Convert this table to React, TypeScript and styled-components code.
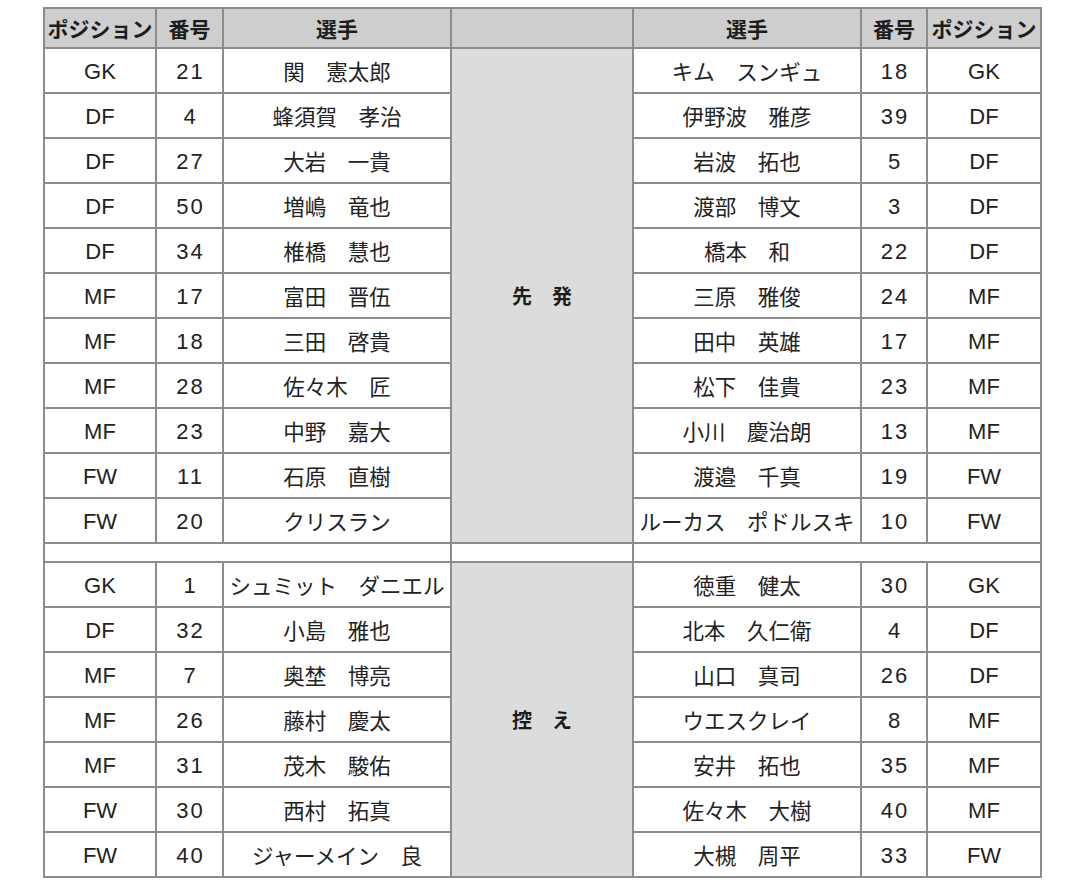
import React from "react";
import styled, { createGlobalStyle } from "styled-components";

const GlobalStyle = createGlobalStyle`
  body {
    margin: 0;
    background: #ffffff;
    font-family: "Liberation Sans", "Noto Sans CJK JP", sans-serif;
    color: #222222;
  }
`;

const Table = styled.table`
  margin: 7px 0 0 43px;
  width: 999px;
  table-layout: fixed;
  border-collapse: collapse;
  border: 2px solid #8c8c8c;
`;

const HeadCell = styled.th`
  height: 38px;
  padding: 0;
  border: 2px solid #8c8c8c;
  background-color: #cecece;
  font-family: "Noto Sans CJK JP", sans-serif;
  font-size: 21px;
  font-weight: bold;
  text-align: center;
  white-space: nowrap;
  color: #1c1c1c;
`;

const Cell = styled.td<{ $num?: boolean }>`
  height: 41px;
  padding: 2px 0 0;
  border: 2px solid #8c8c8c;
  background-color: #ffffff;
  font-family: "Liberation Sans", sans-serif;
  font-size: 22px;
  text-align: center;
  white-space: nowrap;
  letter-spacing: ${(p) => (p.$num ? "2px" : "0")};
  text-indent: ${(p) => (p.$num ? "2px" : "0")};
`;

const NameCell = styled(Cell)`
  padding: 0;
  height: 43px;
  font-family: "Noto Sans CJK JP", sans-serif;
  font-size: 21.5px;
`;

const GroupCell = styled.td`
  padding: 0;
  border: 2px solid #8c8c8c;
  background-color: #dcdcdc;
  font-family: "Noto Sans CJK JP", sans-serif;
  font-size: 20px;
  font-weight: bold;
  text-align: center;
  color: #1c1c1c;
`;

const SpacerCell = styled.td`
  height: 17px;
  padding: 0;
  border: 2px solid #8c8c8c;
  background-color: #ffffff;
`;

type Side = [string, string, string];

const starters: { home: Side; away: Side }[] = [
  { home: ["GK", "21", "関　憲太郎"], away: ["キム　スンギュ", "18", "GK"] },
  { home: ["DF", "4", "蜂須賀　孝治"], away: ["伊野波　雅彦", "39", "DF"] },
  { home: ["DF", "27", "大岩　一貴"], away: ["岩波　拓也", "5", "DF"] },
  { home: ["DF", "50", "増嶋　竜也"], away: ["渡部　博文", "3", "DF"] },
  { home: ["DF", "34", "椎橋　慧也"], away: ["橋本　和", "22", "DF"] },
  { home: ["MF", "17", "富田　晋伍"], away: ["三原　雅俊", "24", "MF"] },
  { home: ["MF", "18", "三田　啓貴"], away: ["田中　英雄", "17", "MF"] },
  { home: ["MF", "28", "佐々木　匠"], away: ["松下　佳貴", "23", "MF"] },
  { home: ["MF", "23", "中野　嘉大"], away: ["小川　慶治朗", "13", "MF"] },
  { home: ["FW", "11", "石原　直樹"], away: ["渡邉　千真", "19", "FW"] },
  { home: ["FW", "20", "クリスラン"], away: ["ルーカス　ポドルスキ", "10", "FW"] },
];

const subs: { home: Side; away: Side }[] = [
  { home: ["GK", "1", "シュミット　ダニエル"], away: ["徳重　健太", "30", "GK"] },
  { home: ["DF", "32", "小島　雅也"], away: ["北本　久仁衛", "4", "DF"] },
  { home: ["MF", "7", "奥埜　博亮"], away: ["山口　真司", "26", "DF"] },
  { home: ["MF", "26", "藤村　慶太"], away: ["ウエスクレイ", "8", "MF"] },
  { home: ["MF", "31", "茂木　駿佑"], away: ["安井　拓也", "35", "MF"] },
  { home: ["FW", "30", "西村　拓真"], away: ["佐々木　大樹", "40", "MF"] },
  { home: ["FW", "40", "ジャーメイン　良"], away: ["大槻　周平", "33", "FW"] },
];

const Group = ({
  label,
  rows,
}: {
  label: string;
  rows: { home: Side; away: Side }[];
}) => (
  <>
    {rows.map((r, i) => (
      <tr key={i}>
        <Cell>{r.home[0]}</Cell>
        <Cell $num>{r.home[1]}</Cell>
        <NameCell>{r.home[2]}</NameCell>
        {i === 0 && <GroupCell rowSpan={rows.length}>{label}</GroupCell>}
        <NameCell>{r.away[0]}</NameCell>
        <Cell $num>{r.away[1]}</Cell>
        <Cell>{r.away[2]}</Cell>
      </tr>
    ))}
  </>
);

export default function App() {
  return (
    <>
      <GlobalStyle />
      <Table>
        <colgroup>
          <col style={{ width: 112 }} />
          <col style={{ width: 67 }} />
          <col style={{ width: 228 }} />
          <col style={{ width: 182 }} />
          <col style={{ width: 228 }} />
          <col style={{ width: 66 }} />
          <col style={{ width: 114 }} />
        </colgroup>
        <thead>
          <tr>
            <HeadCell>ポジション</HeadCell>
            <HeadCell>番号</HeadCell>
            <HeadCell>選手</HeadCell>
            <HeadCell />
            <HeadCell>選手</HeadCell>
            <HeadCell>番号</HeadCell>
            <HeadCell>ポジション</HeadCell>
          </tr>
        </thead>
        <tbody>
          <Group label="先　発" rows={starters} />
          <tr>
            <SpacerCell colSpan={3} />
            <SpacerCell />
            <SpacerCell colSpan={3} />
          </tr>
          <Group label="控　え" rows={subs} />
        </tbody>
      </Table>
    </>
  );
}
